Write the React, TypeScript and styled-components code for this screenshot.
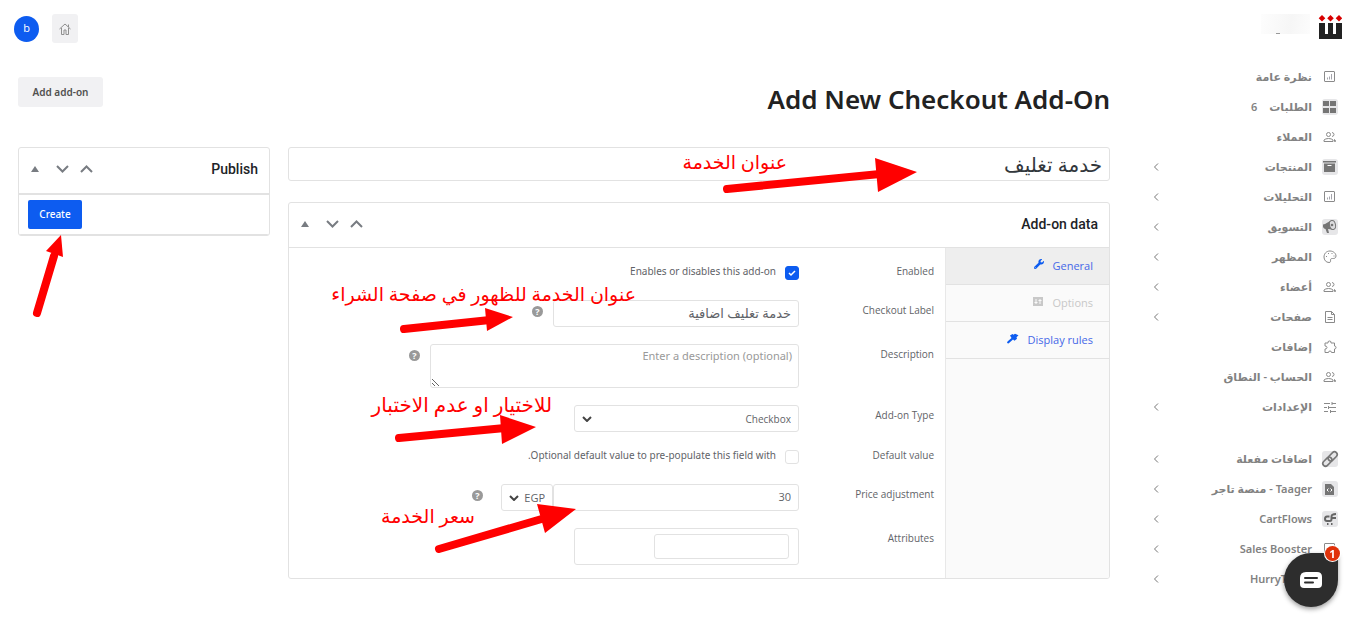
import React from "react";
import styled, { createGlobalStyle } from "styled-components";
import { FaWrench } from "react-icons/fa";

const Global = createGlobalStyle`
  *, *::before, *::after { box-sizing: border-box; }
  body { margin: 0; background: #fff; color: #5f6368; font: 10px/14px "Open Sans", "DejaVu Sans", sans-serif; }
  button, input, textarea, select { font: inherit; color: inherit; margin: 0; }
  h1, h2, ul { margin: 0; padding: 0; }
`;

const Page = styled.div`display: flex; align-items: flex-start; min-height: 100vh;`;

/* Sidebar */
const Sidebar = styled.nav`width: 213px; flex: none; padding: 14px 7px 0 12px;`;
const Brand = styled.div`display: flex; justify-content: flex-start; gap: 8px; height: 48px;`;
const BrandName = styled.div`
  display: flex; align-items: flex-end; justify-content: center; width: 49px; height: 20px; padding-right: 16px;
  background: linear-gradient(100deg, #fdfdfd, #f6f6f6 60%, #fcfcfc);
  &::after { content: ""; width: 4px; height: 1px; background: #999; }
`;
const Menu = styled.ul`list-style: none; & + & { margin-top: 22px; }`;
const MenuLink = styled.a`
  display: flex; align-items: center; height: 30px; padding: 0 4px 0 5px; gap: 10px;
  color: #828282; text-decoration: none; font: 600 11px/16px "Noto Sans", "DejaVu Sans", sans-serif;
`;
const IconBox = styled.span<{ $filled?: boolean }>`
  display: flex; align-items: center; justify-content: center; width: 16px; height: 16px; border-radius: 3px;
  background: ${p => (p.$filled ? "#e6e6e8" : "transparent")};
  svg { display: block; overflow: visible; }
`;
const MenuText = styled.span`padding-bottom: 1px;`;
const Count = styled(MenuText)`margin-inline-start: 2px;`;
const Spacer = styled.span`flex: 1;`;

/* Main */
const Main = styled.main`flex: 1; min-width: 0; padding: 14px 26px 0 18px;`;
const TopBar = styled.header`display: flex; justify-content: flex-end; align-items: center; gap: 13px; height: 29px; margin-left: -4px;`;
const HomeLink = styled.a`
  display: flex; align-items: center; justify-content: center; width: 26px; height: 29px;
  background: #f1f1f3; border-radius: 3px; color: #8f8f8f;
`;
const Avatar = styled.button`
  width: 25px; height: 26px; padding: 0 0 2px; border: 0; border-radius: 50%; background: #0d5cf0; color: #fff; font-size: 11px;
`;
const TitleBar = styled.div`display: flex; justify-content: space-between; align-items: center; margin-top: 34px; height: 30px;`;
const PageTitle = styled.h1`font: 600 26px/30px "Noto Sans", sans-serif; color: #222; padding-top: 14px;`;
const AddButton = styled.button`
  width: 85px; height: 30px; padding: 0; border: 0; border-radius: 3px; background: #f1f1f3; color: #50504f;
  font-family: "Noto Sans", sans-serif; font-weight: 600;
`;
const Columns = styled.div`display: flex; align-items: flex-start; gap: 18px; margin-top: 40px;`;
const Content = styled.div`position: relative; flex: 1; min-width: 0;`;
const Aside = styled.aside`position: relative; width: 252px; flex: none;`;

const box = `border: 1px solid #e2e2e2; border-radius: 3px; background: #fff;`;
const TitleInput = styled.input`
  ${box} display: block; width: 100%; height: 34px; padding: 0 7px; font-size: 20px; color: #32373c;
`;
const Panel = styled.section<{ $gap?: boolean }>`${box} margin-top: ${p => (p.$gap ? 21 : 0)}px; overflow: hidden;`;
const PanelHead = styled.div<{ $heavy?: boolean }>`
  display: flex; align-items: center; justify-content: space-between; height: ${p => (p.$heavy ? 47 : 45)}px;
  padding: 0 11px 3px 10px; border-bottom: ${p => (p.$heavy ? 2 : 1)}px solid #e2e2e2;
`;
const PanelTitle = styled.h2`font: 500 14px/18px Roboto, sans-serif; color: #1d2327;`;
const HeadActions = styled.div`display: flex; align-items: center; gap: 10px;`;
const IconButton = styled.button`
  display: flex; align-items: center; justify-content: center; width: 14px; height: 20px;
  border: 0; padding: 0; background: none; color: #787c82;
  &:last-child { margin-inline-start: 3px; margin-left: -1px; }
`;
const PublishBody = styled.div`display: flex; justify-content: flex-end; padding: 5px 9px; border-bottom: 1px solid #e2e2e2;`;
const CreateButton = styled.button`
  width: 54px; height: 29px; padding: 0 0 2px; border: 0; border-radius: 2px; background: #0d5cf0; color: #fff;
  font-family: "Noto Sans", sans-serif; font-weight: 500;
`;

const PanelBody = styled.div`display: flex;`;
const Tabs = styled.div`width: 164px; flex: none; border-left: 1px solid #e8e8e8; background: #fafafa;`;
const Tab = styled.a<{ $active?: boolean; $off?: boolean }>`
  display: flex; align-items: center; gap: 9px; height: 37px; padding: 0 16px; border-bottom: 1px solid #e2e2e2;
  text-decoration: none; font-size: 11px;
  background: ${p => (p.$active ? "#eee" : "transparent")};
  color: ${p => (p.$off ? "#c8c8c8" : "#4668e8")};
  svg { color: ${p => (p.$off ? "#c8c8c8" : "#0d5cf0")}; margin-bottom: 4px; }
`;
const Form = styled.form`flex: 1; min-width: 0; display: flex; flex-direction: column; gap: 17px; padding: 17px 11px 13px;`;
const Row = styled.div`display: flex; align-items: flex-start;`;
const Label = styled.label<{ $flush?: boolean }>`width: 135px; flex: none; line-height: 12px; padding-top: ${p => (p.$flush ? 0 : 4)}px;`;
const Field = styled.div`display: flex; align-items: flex-start;`;
const CheckField = styled.label`
  display: flex; align-items: flex-start; gap: 9px; height: 18px;
  font-family: "Noto Sans", sans-serif; line-height: 12px;
`;
const Check = styled.input`
  appearance: none; ${box} width: 14px; height: 14px; margin-top: 1px;
  &:checked {
    border-color: #0d5cf0;
    background: #0d5cf0 url("data:image/svg+xml,%3Csvg xmlns='http://www.w3.org/2000/svg' viewBox='0 0 12 12'%3E%3Cpath d='M3 6l2 2 4-4' fill='none' stroke='white' stroke-width='1.5'/%3E%3C/svg%3E");
  }
`;
const TextInput = styled.input<{ $w: number; $large?: boolean }>`
  ${box} width: ${p => p.$w}px; height: 27px; padding: 0 7px 2px; font-size: ${p => (p.$large ? 13 : 11)}px;
`;
const TextArea = styled.textarea`
  ${box} display: block; width: 369px; height: 44px; padding: 3px 6px; resize: vertical;
  font: 11px/15px "Noto Sans", "DejaVu Sans", sans-serif;
  &::placeholder { color: #999; opacity: 1; }
`;
const Select = styled.select<{ $w: number; $big?: boolean }>`
  appearance: none; ${box} width: ${p => p.$w}px; height: 27px; padding: 0 7px; font-size: ${p => (p.$big ? 11 : 10)}px;
  background: #fff url("data:image/svg+xml,%3Csvg xmlns='http://www.w3.org/2000/svg' width='10' height='6' viewBox='0 0 10 6'%3E%3Cpath d='M1 1l4 4 4-4' fill='none' stroke='%23444' stroke-width='2'/%3E%3C/svg%3E") no-repeat left 7px center;
`;
const Attributes = styled.div`${box} width: 225px; height: 37px; padding: 5px 9px;`;
const AttributesInput = styled.input`${box} display: block; width: 135px; height: 25px;`;
const Help = styled.button<{ $far?: boolean }>`
  width: 11px; height: 11px; margin: 6px ${p => (p.$far ? 18 : 10)}px 0; padding: 0; border: 0; border-radius: 50%;
  background: #999; color: #fff; font-size: 9px; line-height: 11px; font-weight: 700;
`;

/* Annotations drawn over the form */
const Arrows = styled.svg`position: absolute; top: 0; right: 0; pointer-events: none; fill: #f00; stroke: #f00; stroke-linecap: round;`;
const AsideArrow = styled(Arrows)`top: 87px; right: auto; left: 10px;`;
const Note = styled.span<{ $top: number; $right: number; $large?: boolean }>`
  position: absolute; top: ${p => p.$top}px; right: ${p => p.$right}px; white-space: nowrap; color: #f00;
  font: ${p => (p.$large ? 20 : 19)}px/26px "Liberation Serif", "DejaVu Sans", serif;
`;

const Chat = styled.button`
  position: fixed; right: 11px; bottom: 18px; width: 54px; height: 54px; padding: 0; border: 0;
  border-radius: 27px 0 27px 27px; background: #2d2d2d; box-shadow: 0 2px 5px rgba(0,0,0,.4);
  display: flex; align-items: center; justify-content: center;
`;
const ChatBadge = styled.span`
  position: absolute; top: -7px; right: -2px; width: 15px; height: 15px; border-radius: 50%; background: #e0320a;
  color: #fff; font-size: 11px; line-height: 15px; font-weight: 700; box-shadow: 0 0 0 1px #fff;
`;

const line = { width: 14, height: 14, viewBox: "0 0 14 14", fill: "none", stroke: "#8a8a8a" };
const ChartIcon = () => <svg {...line}><rect x="1.500" y="1.500" width="10" height="10" rx=".5" /><path d="M4.500 7.500v2M6.500 6.500v3M8.500 4v5.500" stroke="#a5a5ad" /></svg>;
const PeopleIcon = () => <svg {...line}><circle cx="5.500" cy="4.500" r="2" /><path d="M9 2.500q2 .3 2 2t-2 2M1 11.500V10q1.500-1.500 4.500-1.500T10 10v1.500zM11.500 9.500v2h1v-1z" /></svg>;
const PaletteIcon = () => (
  <svg {...line}><path d="M7 1C3 1 1 4 1 7s2 5.500 5 5.500c2 0 1.500-1.500 1.500-2.500S8 8.500 9.500 8.500s3.500 0 3.500-2.500S10.500 1 7 1z" />
    <path d="M3 6.500h1M5 3.500h1M8.500 3.500h1M10.500 6h1" /></svg>
);
const PageIcon = () => <svg {...line}><path d="M2.500 1.500h6l3 3v8h-9zM8.500 1.500v3h3M4.500 7.500h5M4.500 9.500h5" /></svg>;
const PuzzleIcon = () => <svg {...line}><path d="M2 3h3q-.5-2 1.500-2T8 3h3.500v3q1.500 0 1.500 1.500T11.500 9v3.500H8.500Q8.500 11 7 11t-1.500 1.500H2V9q2 0 2-1.500T2 6z" /></svg>;
const TuneIcon = () => <svg {...line}><path d="M1 3.500h6M9 3.500h4M9 2v3M1 7.500h3M6 7.500h7M5.500 6v3M1 11.500h4M7 11.500h6M7.500 10v3" /></svg>;
const MegaphoneIcon = () => (
  <svg width="14" height="14" viewBox="0 0 14 14"><path d="M0 4.500L2 4 8 .500q-2 4 1 9L5 9l1 4H4L2.500 9 1 8.500Q-.5 6.500 0 4.500z" fill="#757575" />
    <ellipse cx="9.500" cy="5" rx="3" ry="4.500" fill="#dcdcde" stroke="#757575" transform="rotate(-12 9.500 5)" /><circle cx="9" cy="5" r="1.300" fill="#757575" /></svg>
);
const ChainIcon = () => (
  <svg width="16" height="16" viewBox="0 0 16 16" fill="none" stroke="#757575" strokeWidth="1.600"><g transform="rotate(-45 8 8)">
    <rect x="-1" y="5.300" width="10.500" height="5.400" rx="2.700" /><rect x="6.500" y="5.300" width="10.500" height="5.400" rx="2.700" /></g></svg>
);
const GridIcon = () => <svg width="14" height="14" viewBox="0 0 14 14" fill="#757575"><path d="M0 1h6v5H0zM7 1h6v5H7zM0 8h6v5H0zM7 8h6v5H7z" /></svg>;
const ArchiveIcon = () => <svg width="14" height="12" viewBox="0 0 14 12" fill="#757575"><path d="M0 0h13v1.500H0zM1 2.500h11V11H1z" /><path d="M4.500 4h4v1h-4z" fill="#fff" /></svg>;
const CodeIcon = () => <svg width="12" height="13" viewBox="0 0 12 13" fill="#757575"><path d="M1 1h6l3 3v8H1z" /><path d="M4.500 5.500L3 7l1.500 1.500M6.500 5.500L8 7 6.500 8.500" fill="none" stroke="#fff" /></svg>;
const FlowIcon = () => <svg width="14" height="14" viewBox="0 0 14 14" fill="none" stroke="#666" strokeWidth="2"><path d="M6.500 4.500H4Q2 4.500 2 7Q2 9 4 9h3q1.500 0 1.500-2V4.500Q8.500 2 13 2M9 6h4" /><path d="M4 12h1.500M8 12h1.500" /></svg>;
const Chevron = () => <svg width="6" height="8" viewBox="0 0 6 8" fill="none" stroke="#777"><path d="M5 .5L1.500 4 5 7.500" /></svg>;
const Up = () => <svg width="13" height="8" viewBox="0 0 13 8" fill="none" stroke="currentColor" strokeWidth="2"><path d="M1 7l5.500-5.500L12 7" /></svg>;
const Down = () => <svg width="13" height="8" viewBox="0 0 13 8" fill="none" stroke="currentColor" strokeWidth="2"><path d="M1 1l5.500 5.500L12 1" /></svg>;
const Toggle = () => <svg width="8" height="6" viewBox="0 0 8 6" fill="currentColor"><path d="M4 0l4 6H0z" /></svg>;
const Logo = () => (
  <svg width="24" height="26" viewBox="-1 0 24 26"><path d="M0 9h6v11h3V9h5v11h3V9h6v16H0z" fill="#222" />
    <path d="M3 1l3.300 3.300L3 7.600-.3 4.300zM11.500 1l3.300 3.300-3.300 3.300-3.300-3.300zM20 1l3.300 3.300L20 7.600l-3.300-3.300z" fill="#d80000" /></svg>
);
const SlidersIcon = () => <svg width="10" height="9" viewBox="0 0 10 9" fill="currentColor"><path d="M0 0h10v9H0z" /><path d="M3 2v5M1.500 5.500h3M7 2v5M5.500 3.500h3" stroke="#fafafa" /></svg>;
const RulesIcon = () => <svg width="12" height="11" viewBox="0 0 12 11" fill="currentColor"><path d="M3 2.500L5.500 1l1 .8L8 .8l3.500 1.400-2 2 .5 1.500-2.500 2L6 6.500 1.500 10.500 0 10l.5-1.500L4.500 5z" /></svg>;

type Item = { text: string; icon: React.ReactNode; filled?: boolean; more?: boolean; count?: number };
const primary: Item[] = [
  { text: "نظرة عامة", icon: <ChartIcon /> },
  { text: "الطلبات", icon: <GridIcon />, filled: true, count: 6 },
  { text: "العملاء", icon: <PeopleIcon /> },
  { text: "المنتجات", icon: <ArchiveIcon />, filled: true, more: true },
  { text: "التحليلات", icon: <ChartIcon />, more: true },
  { text: "التسويق", icon: <MegaphoneIcon />, filled: true, more: true },
  { text: "المظهر", icon: <PaletteIcon />, more: true },
  { text: "أعضاء", icon: <PeopleIcon />, more: true },
  { text: "صفحات", icon: <PageIcon />, more: true },
  { text: "إضافات", icon: <PuzzleIcon /> },
  { text: "الحساب - النطاق", icon: <PeopleIcon /> },
  { text: "الإعدادات", icon: <TuneIcon />, more: true },
];
const secondary: Item[] = [
  { text: "اضافات مفعلة", icon: <ChainIcon />, filled: true, more: true },
  { text: "Taager - منصة تاجر", icon: <CodeIcon />, filled: true, more: true },
  { text: "CartFlows", icon: <FlowIcon />, filled: true, more: true },
  { text: "Sales Booster", icon: <ChartIcon />, more: true },
  { text: "HurryTimer", icon: <ChartIcon />, more: true },
];
const MenuList = ({ items }: { items: Item[] }) => (
  <Menu>
    {items.map(i => (
      <li key={i.text}>
        <MenuLink href="#">
          <IconBox $filled={i.filled}>{i.icon}</IconBox>
          <MenuText>{i.text}</MenuText>
          {i.count && <Count>{i.count}</Count>}
          <Spacer />
          {i.more && <Chevron />}
        </MenuLink>
      </li>
    ))}
  </Menu>
);
const PanelActions = () => (
  <HeadActions>
    <IconButton type="button" aria-label="Move up"><Up /></IconButton>
    <IconButton type="button" aria-label="Move down"><Down /></IconButton>
    <IconButton type="button" aria-label="Toggle panel"><Toggle /></IconButton>
  </HeadActions>
);

export default function App() {
  return (
    <Page dir="rtl">
      <Global />
      <Sidebar>
        <Brand><Logo /><BrandName /></Brand>
        <MenuList items={primary} />
        <MenuList items={secondary} />
      </Sidebar>
      <Main>
        <TopBar>
          <HomeLink href="#" aria-label="Home">
            <svg width="12" height="12" viewBox="0 0 12 12" fill="none" stroke="currentColor"><path d="M.5 6L6 1l5.500 5M2.500 5v6.500h2.500V7h2v4.500h2.500V5M9.500 4V1.500" /></svg>
          </HomeLink>
          <Avatar type="button">b</Avatar>
        </TopBar>
        <TitleBar>
          <PageTitle>Add New Checkout Add-On</PageTitle>
          <AddButton type="button">Add add-on</AddButton>
        </TitleBar>
        <Columns>
          <Content>
            <TitleInput aria-label="Title" defaultValue="خدمة تغليف" />
            <Panel $gap>
              <PanelHead><PanelTitle>Add-on data</PanelTitle><PanelActions /></PanelHead>
              <PanelBody>
                <Tabs>
                  <Tab href="#" $active>General<FaWrench size={10} /></Tab>
                  <Tab href="#" $off>Options<SlidersIcon /></Tab>
                  <Tab href="#">Display rules<RulesIcon /></Tab>
                </Tabs>
                <Form>
                  <Row>
                    <Label $flush htmlFor="enabled">Enabled</Label>
                    <CheckField><Check id="enabled" type="checkbox" defaultChecked />Enables or disables this add-on</CheckField>
                  </Row>
                  <Row>
                    <Label htmlFor="label">Checkout Label</Label>
                    <Field><TextInput id="label" $w={246} $large defaultValue="خدمة تغليف اضافية" /><Help type="button">?</Help></Field>
                  </Row>
                  <Row>
                    <Label htmlFor="description">Description</Label>
                    <Field><TextArea id="description" placeholder="Enter a description (optional)" /><Help type="button">?</Help></Field>
                  </Row>
                  <Row>
                    <Label htmlFor="type">Add-on Type</Label>
                    <Select id="type" $w={225}><option>Checkbox</option></Select>
                  </Row>
                  <Row>
                    <Label $flush htmlFor="default">Default value</Label>
                    <CheckField><Check id="default" type="checkbox" />Optional default value to pre-populate this field with.</CheckField>
                  </Row>
                  <Row>
                    <Label htmlFor="price">Price adjustment</Label>
                    <Field>
                      <TextInput id="price" $w={246} defaultValue="30" />
                      <Select aria-label="Currency" $w={52} $big><option>EGP</option></Select>
                      <Help type="button" $far>?</Help>
                    </Field>
                  </Row>
                  <Row>
                    <Label htmlFor="attributes">Attributes</Label>
                    <Attributes><AttributesInput id="attributes" /></Attributes>
                  </Row>
                </Form>
              </PanelBody>
            </Panel>
            <Arrows width="822" height="432" viewBox="288 147 822 432" aria-hidden="true">
              <g strokeWidth="8">
                <path d="M727 189L880 174M404 329L490 320M399 438L505 428M439 549L545 518" />
              </g>
              <path stroke="none" d="M875 158L917 172 878 192zM485 308L513 317 487 331zM500 415L536 427 502 444zM537 504L576 509 545 533z" />
            </Arrows>
            <Note $top={3} $right={323}>عنوان الخدمة</Note>
            <Note $top={135} $right={474}>عنوان الخدمة للظهور في صفحة الشراء</Note>
            <Note $top={245} $right={558} $large>للاختيار او عدم الاختبار</Note>
            <Note $top={357} $right={635}>سعر الخدمة</Note>
          </Content>
          <Aside>
            <Panel>
              <PanelHead $heavy><PanelTitle>Publish</PanelTitle><PanelActions /></PanelHead>
              <PublishBody><CreateButton type="button">Create</CreateButton></PublishBody>
            </Panel>
            <AsideArrow width="40" height="85" viewBox="28 234 40 85" aria-hidden="true">
              <path strokeWidth="8" d="M37 313L54 256" />
              <path stroke="none" d="M61 235L63 257 46 251z" />
            </AsideArrow>
          </Aside>
        </Columns>
      </Main>
      <Chat type="button" aria-label="Chat">
        <svg width="22" height="16" viewBox="0 0 22 16"><path d="M6 0h11q5 0 5 5v7q0 4-4 4H4q-4 0-4-4V6q0-6 6-6z" fill="#fff" /><path d="M5 6h12M5 10.500h8" stroke="#2d2d2d" strokeWidth="2" strokeLinecap="round" /></svg>
        <ChatBadge>1</ChatBadge>
      </Chat>
    </Page>
  );
}
